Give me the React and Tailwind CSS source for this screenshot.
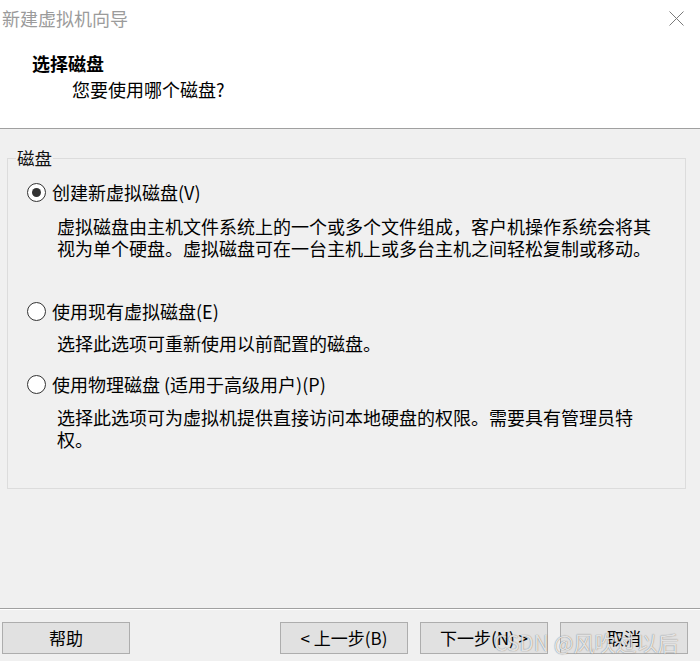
export default function App() {
  return (
    <div className="relative w-[700px] h-[661px] flex flex-col bg-[#f0f0f0] text-black font-['Noto_Sans_CJK_SC',sans-serif] overflow-hidden">
      <div className="h-[129px] shrink-0 bg-white border-b border-[#a0a0a0] flex flex-col">
        <div className="h-[36px] flex items-center justify-between pl-[2px] pr-[16px]">
          <span className="text-[18px] leading-[36px] text-[#9b9b9b]">新建虚拟机向导</span>
          <svg width="15" height="15" viewBox="0 0 15 15">
            <path d="M0.5 0.5 L14.5 14.5 M14.5 0.5 L0.5 14.5" stroke="#7a7a7a" strokeWidth="1" fill="none" />
          </svg>
        </div>
        <div className="mt-[16px] pl-[32px] text-[18px] leading-[22px] font-bold">选择磁盘</div>
        <div className="mt-[4px] pl-[72px] text-[18px] leading-[22px]">您要使用哪个磁盘?</div>
      </div>

      <div className="flex-1 pl-[7px] pr-[14px]">
        <fieldset className="mt-[19px] h-[341px] border border-[#dcdcdc]">
          <legend className="ml-[8px] px-[1px] text-[17.5px] leading-[20px] text-[#111]">磁盘</legend>
          <div className="pt-[13px]">
            <div className="flex items-center h-[22px]">
              <span className="ml-[19px] w-[19px] h-[19px] rounded-full border border-[#333] bg-white flex items-center justify-center">
                <span className="w-[9px] h-[9px] rounded-full bg-[#333]" />
              </span>
              <span className="ml-[6px] text-[18px] leading-[22px]">创建新虚拟磁盘(V)</span>
            </div>
            <div className="mt-[12px] pl-[49px] text-[18px] leading-[22px] whitespace-nowrap">
              虚拟磁盘由主机文件系统上的一个或多个文件组成，客户机操作系统会将其
              <br />
              视为单个硬盘。虚拟磁盘可在一台主机上或多台主机之间轻松复制或移动。
            </div>

            <div className="mt-[41px] flex items-center h-[22px]">
              <span className="ml-[19px] w-[19px] h-[19px] rounded-full border border-[#333] bg-white" />
              <span className="ml-[6px] text-[18px] leading-[22px]">使用现有虚拟磁盘(E)</span>
            </div>
            <div className="mt-[10px] pl-[49px] text-[18px] leading-[22px] whitespace-nowrap">
              选择此选项可重新使用以前配置的磁盘。
            </div>

            <div className="mt-[19px] flex items-center h-[22px]">
              <span className="ml-[19px] w-[19px] h-[19px] rounded-full border border-[#333] bg-white" />
              <span className="ml-[6px] text-[18px] leading-[22px]">使用物理磁盘 (适用于高级用户)(P)</span>
            </div>
            <div className="mt-[11px] pl-[49px] text-[18px] leading-[22px] whitespace-nowrap">
              选择此选项可为虚拟机提供直接访问本地硬盘的权限。需要具有管理员特
              <br />
              权。
            </div>
          </div>
        </fieldset>
      </div>

      <div className="h-[53px] shrink-0 border-t border-[#a0a0a0] shadow-[inset_0_1px_0_#ffffff] pt-[13px] pl-[2px] pr-[12px] flex justify-between items-start">
        <button className="w-[128px] h-[32px] border border-[#adadad] bg-[#e1e1e1] text-[17px] leading-[30px] text-black">帮助</button>
        <div className="flex gap-[12px]">
          <button className="w-[128px] h-[32px] border border-[#adadad] bg-[#e1e1e1] text-[17px] leading-[30px] text-black">&lt; 上一步(B)</button>
          <button className="w-[128px] h-[32px] border border-[#adadad] bg-[#e1e1e1] text-[17px] leading-[30px] text-black">下一步(N) &gt;</button>
          <button className="w-[128px] h-[32px] border border-[#adadad] bg-[#e1e1e1] text-[17px] leading-[30px] text-black">取消</button>
        </div>
      </div>

      <div className="absolute left-[494px] top-[627px] text-[21px] leading-[30px] text-white/80 whitespace-nowrap pointer-events-none [text-shadow:0_0_1px_rgba(0,0,0,0.6)]">
        CSDN @风吹过以后
      </div>
    </div>
  );
}
